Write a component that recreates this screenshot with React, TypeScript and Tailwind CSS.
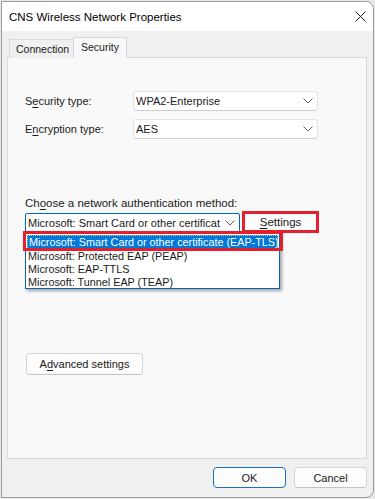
import React from "react";

const Chevron = () => (
  <svg width="10" height="6" viewBox="0 0 10 6">
    <polyline points="0.5,0.5 5,5 9.5,0.5" fill="none" stroke="#5f5f5f" strokeWidth="1" />
  </svg>
);

const Combo = ({ value }: { value: string }) => (
  <div className="w-[185px] h-[20px] bg-white border border-[#e3e3e3] border-b-[#cfcfcf] rounded-[3px] flex items-center justify-between pl-[2px] pr-[4px]">
    <span className="leading-[16px]">{value}</span>
    <Chevron />
  </div>
);

export default function App() {
  return (
    <div className="w-[375px] h-[499px] bg-[#e8e8e8] pt-px pl-px overflow-hidden font-['Liberation_Sans',Arial,sans-serif] text-[11px] text-[#1a1a1a]">
      <div className="w-[373px] h-[497px] border border-[#9c9c9c] rounded-r-[8px] bg-[#f0f0f0] flex flex-col overflow-hidden">
        {/* Title bar */}
        <div className="h-[29px] bg-white flex items-center justify-between pl-[7px] pr-[7px] shrink-0">
          <span className="leading-[16px] text-[11.5px] text-[#000]">CNS Wireless Network Properties</span>
          <svg width="11" height="11" viewBox="0 0 11 11">
            <path d="M0.5 0.5 L10.5 10.5 M10.5 0.5 L0.5 10.5" stroke="#1a1a1a" strokeWidth="1" fill="none" />
          </svg>
        </div>

        {/* Body */}
        <div className="flex-1 flex flex-col pl-[5px] pr-[6px] pt-[6px] pb-[7px]">
          {/* Tabs */}
          <div className="flex items-end ml-[2px] relative z-10 -mb-px">
            <div className="w-[64px] h-[19px] border border-r-0 border-b-0 border-[#d9d9d9] bg-[#f0f0f0] flex items-center pl-[6px]">
              <span className="leading-[16px] text-[10.5px]">Connection</span>
            </div>
            <div className="w-[54px] h-[21px] border border-b-0 border-[#d9d9d9] bg-[#f9f9f9] flex items-start justify-center pt-[1px]">
              <span className="leading-[16px] text-[10.5px]">Security</span>
            </div>
          </div>

          {/* Panel */}
          <div className="h-[402px] border border-[#d9d9d9] bg-[#f9f9f9] flex flex-col pl-[17px]">
            <div className="flex items-center mt-[33px]">
              <span className="w-[108px] leading-[16px]">
                S<span className="underline underline-offset-2">e</span>curity type:
              </span>
              <Combo value="WPA2-Enterprise" />
            </div>
            <div className="flex items-center mt-[8px]">
              <span className="w-[108px] leading-[16px]">
                E<span className="underline underline-offset-2">n</span>cryption type:
              </span>
              <Combo value="AES" />
            </div>

            <div className="mt-[56px] leading-[16px] text-[11.5px]">
              Ch<span className="underline underline-offset-2">o</span>ose a network authentication method:
            </div>

            <div className="flex items-start">
              <div className="relative mt-[2px]">
                <div className="w-[215px] h-[20px] bg-white border border-[#0067c0] rounded-[2px] flex items-center justify-between pl-[2px] pr-[4px] overflow-hidden">
                  <span className="leading-[16px] whitespace-nowrap overflow-hidden w-[196px]">
                    Microsoft: Smart Card or other certificat
                  </span>
                  <Chevron />
                </div>
                {/* Dropdown list */}
                <div className="absolute top-[20px] left-0 w-[255px] h-[56px] bg-white border border-[#0a64b4] shadow-[2px_2px_3px_rgba(0,0,0,0.35)] z-20 flex flex-col pt-[1px] text-[10.8px]">
                  <div className="h-[15px] mx-[1px] bg-[#0078d7] text-white leading-[13px] pl-[1px] border border-dotted border-[#f5c36a] whitespace-nowrap">
                    Microsoft: Smart Card or other certificate (EAP-TLS)
                  </div>
                  <div className="h-[13px] leading-[13px] pl-[2px] whitespace-nowrap">Microsoft: Protected EAP (PEAP)</div>
                  <div className="h-[13px] leading-[13px] pl-[2px] whitespace-nowrap">Microsoft: EAP-TTLS</div>
                  <div className="h-[13px] leading-[13px] pl-[2px] whitespace-nowrap">Microsoft: Tunnel EAP (TEAP)</div>
                  <div className="absolute -left-[3px] -top-[3px] w-[260px] h-[20px] border-[3px] border-[#e5202e]" />
                </div>
              </div>
              <div className="ml-[2px] w-[77px] h-[22px] border-[3px] border-[#e5202e] bg-[#fdfdfd] flex items-center justify-center">
                <span className="leading-[16px] text-[11.5px]">
                  <span className="underline underline-offset-2">S</span>ettings
                </span>
              </div>
            </div>

            <div className="mt-[120px] ml-[1px] w-[117px] h-[22px] bg-[#fdfdfd] border border-[#d5d5d5] border-b-[#c4c4c4] rounded-[4px] flex items-center justify-center">
              <span className="leading-[16px]">
                A<span className="underline underline-offset-2">d</span>vanced settings
              </span>
            </div>
          </div>

          {/* Footer */}
          <div className="flex justify-end gap-[8px] mt-[8px]">
            <div className="w-[73px] h-[21px] bg-[#fdfdfd] border border-[#1a6fc0] rounded-[4px] flex items-center justify-center">
              <span className="leading-[16px]">OK</span>
            </div>
            <div className="w-[73px] h-[21px] bg-[#fdfdfd] border border-[#d5d5d5] border-b-[#c4c4c4] rounded-[4px] flex items-center justify-center">
              <span className="leading-[16px]">Cancel</span>
            </div>
          </div>
        </div>
      </div>
    </div>
  );
}
